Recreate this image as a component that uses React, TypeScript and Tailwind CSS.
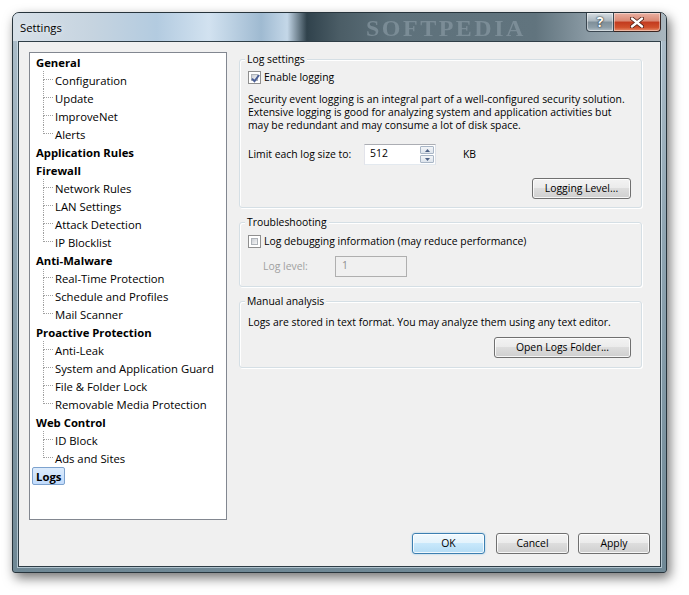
import React from 'react';

type Node = { label: string; children?: string[]; selected?: boolean };

const tree: Node[] = [
  { label: 'General', children: ['Configuration', 'Update', 'ImproveNet', 'Alerts'] },
  { label: 'Application Rules' },
  { label: 'Firewall', children: ['Network Rules', 'LAN Settings', 'Attack Detection', 'IP Blocklist'] },
  { label: 'Anti-Malware', children: ['Real-Time Protection', 'Schedule and Profiles', 'Mail Scanner'] },
  {
    label: 'Proactive Protection',
    children: ['Anti-Leak', 'System and Application Guard', 'File & Folder Lock', 'Removable Media Protection'],
  },
  { label: 'Web Control', children: ['ID Block', 'Ads and Sites'] },
  { label: 'Logs', selected: true },
];

// Vista style push button
const Button: React.FC<{ label: string; w: string; primary?: boolean }> = ({ label, w, primary }) => (
  <button
    className={`${w} h-[21px] rounded-[3px] border leading-[19px] text-black ${
      primary
        ? 'border-[#3c7fb1] bg-[linear-gradient(180deg,#f1f9fe_0%,#e3f3fc_48%,#c8e8fb_50%,#b4dcf5_100%)] shadow-[inset_0_0_0_1px_rgba(255,255,255,0.8),0_0_2px_rgba(80,170,230,0.6)]'
        : 'border-[#707070] bg-[linear-gradient(180deg,#f3f3f3_0%,#ebebeb_48%,#dddddd_50%,#cfcfcf_100%)] shadow-[inset_0_0_0_1px_rgba(255,255,255,0.8)]'
    }`}
  >
    {label}
  </button>
);

const Checkbox: React.FC<{ checked?: boolean }> = ({ checked }) => (
  <span className="w-[13px] h-[13px] border border-[#8f8f8f] bg-white p-[2px] shrink-0">
    <span className="block w-full h-full border border-[#aeb3b9] bg-[linear-gradient(135deg,#cbcfd5_0%,#f6f6f6_100%)] relative">
      {checked && (
        <svg viewBox="0 0 7 7" className="absolute -left-[1px] -top-[1px] w-[9px] h-[9px]">
          <path d="M0.8 3.6 L2.7 5.6 L6.3 0.8" fill="none" stroke="#4a5f97" strokeWidth="1.5" />
        </svg>
      )}
    </span>
  </span>
);

const GroupBox: React.FC<{ title: string; className?: string; children: React.ReactNode }> = ({
  title,
  className = '',
  children,
}) => (
  <div className={`border border-[#d5dfe5] rounded-[3px] px-[8px] shadow-[inset_1px_1px_0_#ffffff,1px_1px_0_#ffffff] ${className}`}>
    <div className="-mt-[7px] -ml-[3px] w-fit px-[2px] h-[13px] leading-[13px] bg-[#f0f0f0]">{title}</div>
    {children}
  </div>
);

const TreeView: React.FC = () => (
  <div className="w-[198px] h-[468px] border border-[#828790] bg-white mt-[10px] ml-[10px] shrink-0 text-[11.3px]">
    {tree.map((n) => (
      <div key={n.label}>
        <div className="h-[18px] flex items-stretch pl-[2px]">
          <span
            className={`px-[3px] border leading-[17px] font-bold rounded-[2px] ${
              n.selected
                ? 'border-[#7da2ce] bg-[linear-gradient(180deg,#dcebfc_0%,#c1dbfc_100%)]'
                : 'border-transparent'
            }`}
          >
            {n.label}
          </span>
        </div>
        {n.children?.map((c, i) => {
          const last = i === n.children!.length - 1;
          return (
            <div key={c} className="h-[18px] flex pl-[13px]">
              <div className="w-[10px] flex flex-col">
                <div className="h-[9px] border-l border-dotted border-[#a0a0a0] flex items-end">
                  <div className="w-full border-b border-dotted border-[#a0a0a0]" />
                </div>
                <div className={last ? 'flex-1' : 'flex-1 border-l border-dotted border-[#a0a0a0]'} />
              </div>
              <span className="pl-[2px] leading-[19px] whitespace-nowrap">{c}</span>
            </div>
          );
        })}
      </div>
    ))}
  </div>
);

const SpinBox: React.FC = () => (
  <div className="w-[72px] h-[21px] border border-[#abadb3] border-l-[#e2e3ea] border-r-[#dbdfe6] border-b-[#e3e9ef] bg-white flex">
    <span className="flex-1 pl-[5px] leading-[17px]">512</span>
    <div className="w-[15px] flex flex-col gap-[1px] py-[1px] pr-[1px]">
      {[0, 1].map((k) => (
        <div
          key={k}
          className="flex-1 border border-[#a9b6c6] rounded-[1px] bg-[linear-gradient(180deg,#f3f5f8_0%,#dde4ec_100%)] flex items-center justify-center"
        >
          <svg viewBox="0 0 5 3" className="w-[5px] h-[3px]">
            <path d={k === 0 ? 'M0 3 L2.5 0 L5 3 Z' : 'M0 0 L2.5 3 L5 0 Z'} fill="#4d6185" />
          </svg>
        </div>
      ))}
    </div>
  </div>
);

const TitleBar: React.FC = () => (
  <div className="h-[28px] flex items-start relative overflow-hidden bg-[linear-gradient(90deg,#d7e0e8_0%,#c6d4e0_12%,#b3cbe0_22%,#d2e2f0_30%,#9fbad1_38%,#c4d7e8_42%,#30424c_45%,#4b5d66_50%,#5e717b_58%,#61747e_80%,#8a9aa4_88%,#a9b6be_100%)]">
    <span className="pl-[7px] pt-[7px] text-[11.3px] leading-[15px] text-black [text-shadow:0_0_6px_rgba(255,255,255,0.9)] relative">
      Settings
    </span>
    <span className="absolute left-[353px] top-[3px] text-[24px] leading-[24px] font-bold tracking-[2.5px] text-[#8e9ea8] opacity-60 blur-[0.6px] font-['Liberation_Serif',serif]">
      SOFTPEDIA
    </span>
    <div className="ml-auto mr-[5px] flex relative">
      <div className="w-[28px] h-[19px] border border-t-0 border-[#3a4650] rounded-bl-[4px] bg-[linear-gradient(180deg,#d7dee3_0%,#a9b5bd_45%,#7f8f99_50%,#8e9ea8_80%,#b3c0c8_100%)] shadow-[inset_0_0_0_1px_rgba(255,255,255,0.45)] flex items-center justify-center">
        <span className="text-white font-bold text-[14px] leading-[14px] [text-shadow:0_0_2px_#1c252b,0_0_1px_#1c252b]">?</span>
      </div>
      <div className="w-[47px] h-[19px] border border-t-0 border-l-0 border-[#3a2420] rounded-br-[4px] bg-[linear-gradient(180deg,#eab0a2_0%,#d98873_45%,#c23a1e_50%,#d0502c_80%,#e8906e_100%)] shadow-[inset_0_0_0_1px_rgba(255,255,255,0.4)] flex items-center justify-center">
        <svg viewBox="0 0 14 11" className="w-[14px] h-[11px]">
          <path d="M2 1.5 L12 9.5 M12 1.5 L2 9.5" stroke="#4a1a10" strokeWidth="4" strokeLinecap="round" />
          <path d="M2 1.5 L12 9.5 M12 1.5 L2 9.5" stroke="#ffffff" strokeWidth="2.4" strokeLinecap="round" />
        </svg>
      </div>
    </div>
  </div>
);

const App: React.FC = () => {
  return (
    <div className="w-[689px] h-[595px] bg-white pt-[12px] pl-[12px] text-[10.4px] text-black font-['Open_Sans',sans-serif]">
      <div className="w-[655px] h-[561px] border border-[#27343c] rounded-t-[7px] rounded-b-[3px] overflow-hidden flex flex-col bg-[linear-gradient(180deg,#aebfcb_0%,#8fa5b2_40%,#6f8895_100%)] shadow-[3px_5px_12px_rgba(0,0,0,0.55)]">
        <TitleBar />
        <div className="flex-1 mx-[5px] mb-[5px] border border-[#2f3e47] bg-[#f0f0f0] shadow-[0_0_0_1px_rgba(220,235,245,0.6)] flex flex-col">
          <div className="flex items-start">
            <TreeView />
            <div className="ml-[12px] mt-[17px] w-[403px] flex flex-col">
              <GroupBox title="Log settings" className="pb-[8px]">
                <label className="mt-[4px] h-[15px] flex items-center gap-[3px]">
                  <Checkbox checked />
                  <span className="leading-[15px]">Enable logging</span>
                </label>
                <p className="mt-[8px] leading-[13px] whitespace-nowrap">
                  Security event logging is an integral part of a well-configured security solution.
                  <br />
                  Extensive logging is good for analyzing system and application activities but
                  <br />
                  may be redundant and may consume a lot of disk space.
                </p>
                <div className="mt-[12px] flex items-center">
                  <span className="w-[116px] whitespace-nowrap">Limit each log size to:</span>
                  <SpinBox />
                  <span className="ml-[27px]">KB</span>
                </div>
                <div className="mt-[13px] flex justify-end pr-[2px]">
                  <Button label="Logging Level..." w="w-[99px]" />
                </div>
              </GroupBox>

              <GroupBox title="Troubleshooting" className="mt-[14px] pb-[9px]">
                <label className="mt-[5px] h-[15px] flex items-center gap-[3px]">
                  <Checkbox />
                  <span className="leading-[15px]">Log debugging information (may reduce performance)</span>
                </label>
                <div className="mt-[7px] flex items-center pl-[15px]">
                  <span className="w-[72px] text-[#a0a0a0]">Log level:</span>
                  <div className="w-[72px] h-[21px] border border-[#afafaf] bg-[#f0f0f0] pl-[6px] leading-[17px] text-[#8d8d8d]">
                    1
                  </div>
                </div>
              </GroupBox>

              <GroupBox title="Manual analysis" className="mt-[14px] pb-[9px]">
                <div className="mt-[7px] h-[15px] leading-[15px] whitespace-nowrap">
                  Logs are stored in text format. You may analyze them using any text editor.
                </div>
                <div className="mt-[7px] flex justify-end pr-[2px]">
                  <Button label="Open Logs Folder..." w="w-[137px]" />
                </div>
              </GroupBox>
            </div>
          </div>

          <div className="mt-auto mb-[12px] mr-[10px] flex justify-end gap-[11px]">
            <Button label="OK" w="w-[73px]" primary />
            <div className="flex gap-[9px]">
              <Button label="Cancel" w="w-[73px]" />
              <Button label="Apply" w="w-[72px]" />
            </div>
          </div>
        </div>
      </div>
    </div>
  );
};

export default App;
